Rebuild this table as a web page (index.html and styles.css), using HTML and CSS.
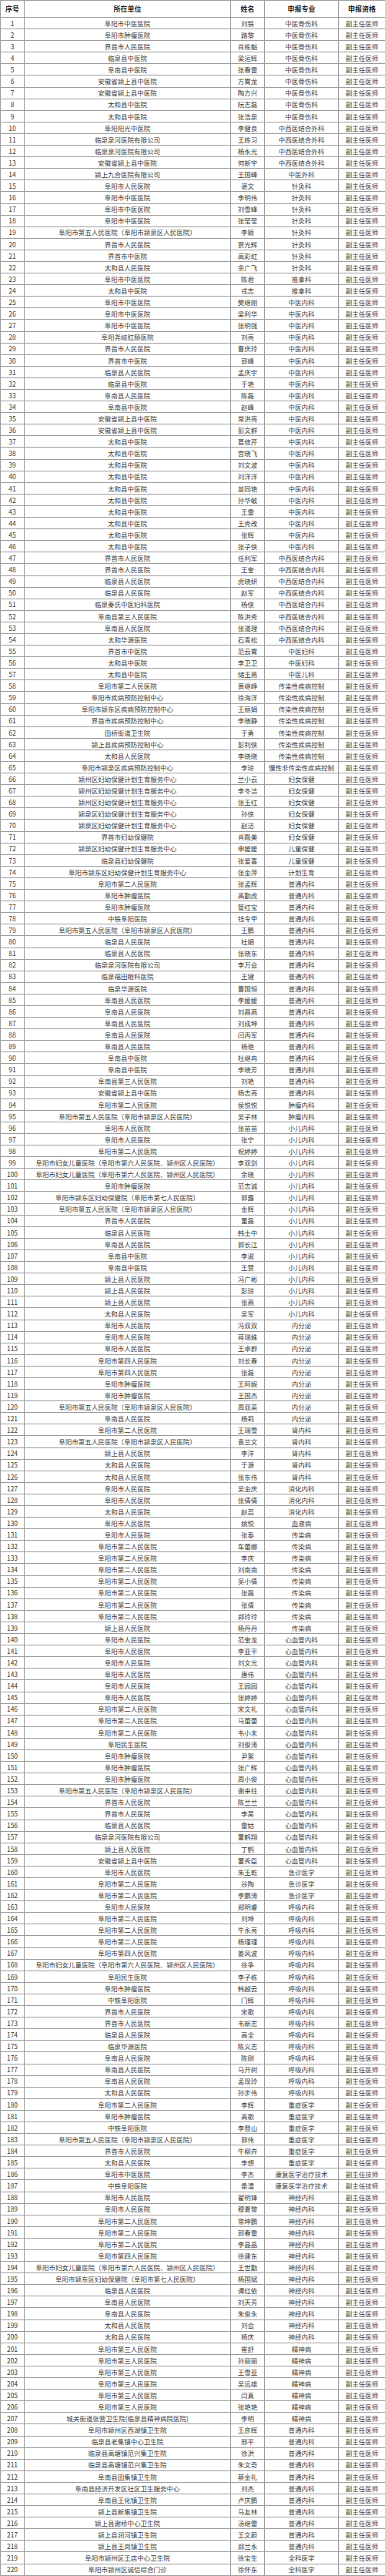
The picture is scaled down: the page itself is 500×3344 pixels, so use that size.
FILE: index.html
```html
<!DOCTYPE html>
<html lang="zh-CN">
<head>
<meta charset="utf-8">
<title>申报名单</title>
<link rel="stylesheet" href="styles.css">
</head>
<body>
<table class="list">
<colgroup><col class="c-no"><col class="c-unit"><col class="c-name"><col class="c-major"><col class="c-qual"></colgroup>
<thead>
<tr><th>序号</th><th>所在单位</th><th>姓名</th><th>申报专业</th><th>申报资格</th></tr>
</thead>
<tbody>
<tr><td>1</td><td>阜阳市中医医院</td><td>刘铁</td><td>中医骨伤科</td><td>副主任医师</td></tr>
<tr><td>2</td><td>阜阳市肿瘤医院</td><td>路黎</td><td>中医骨伤科</td><td>副主任医师</td></tr>
<tr><td>3</td><td>界首市人民医院</td><td>肖栋魁</td><td>中医骨伤科</td><td>副主任医师</td></tr>
<tr><td>4</td><td>临泉县中医院</td><td>梁运辉</td><td>中医骨伤科</td><td>副主任医师</td></tr>
<tr><td>5</td><td>阜南县中医院</td><td>张春雷</td><td>中医骨伤科</td><td>副主任医师</td></tr>
<tr><td>6</td><td>安徽省颍上县中医院</td><td>方霄龙</td><td>中医骨伤科</td><td>副主任医师</td></tr>
<tr><td>7</td><td>安徽省颍上县中医院</td><td>陶方兴</td><td>中医骨伤科</td><td>副主任医师</td></tr>
<tr><td>8</td><td>太和县中医院</td><td>阮志磊</td><td>中医骨伤科</td><td>副主任医师</td></tr>
<tr><td>9</td><td>太和县中医院</td><td>张浩泉</td><td>中医骨伤科</td><td>副主任医师</td></tr>
<tr><td>10</td><td>阜阳阳光中医院</td><td>李健良</td><td>中西医结合外科</td><td>副主任医师</td></tr>
<tr><td>11</td><td>临泉泉河医院有限公司</td><td>王练习</td><td>中西医结合外科</td><td>副主任医师</td></tr>
<tr><td>12</td><td>临泉泉河医院有限公司</td><td>杨永光</td><td>中西医结合外科</td><td>副主任医师</td></tr>
<tr><td>13</td><td>安徽省颍上县中医院</td><td>何新宇</td><td>中西医结合外科</td><td>副主任医师</td></tr>
<tr><td>14</td><td>颍上九合医院有限公司</td><td>王国峰</td><td>中医外科</td><td>副主任医师</td></tr>
<tr><td>15</td><td>阜阳市人民医院</td><td>谌文</td><td>针灸科</td><td>副主任医师</td></tr>
<tr><td>16</td><td>阜阳市中医医院</td><td>李明伟</td><td>针灸科</td><td>副主任医师</td></tr>
<tr><td>17</td><td>阜阳市中医医院</td><td>刘雪峰</td><td>针灸科</td><td>副主任医师</td></tr>
<tr><td>18</td><td>阜阳市中医医院</td><td>张莹莹</td><td>针灸科</td><td>副主任医师</td></tr>
<tr><td>19</td><td>阜阳市第五人民医院（阜阳市颍泉区人民医院）</td><td>李颖</td><td>针灸科</td><td>副主任医师</td></tr>
<tr><td>20</td><td>界首市人民医院</td><td>贾光辉</td><td>针灸科</td><td>副主任医师</td></tr>
<tr><td>21</td><td>界首市中医院</td><td>高彩虹</td><td>针灸科</td><td>副主任医师</td></tr>
<tr><td>22</td><td>太和县人民医院</td><td>余广飞</td><td>针灸科</td><td>副主任医师</td></tr>
<tr><td>23</td><td>阜阳市中医医院</td><td>陈君</td><td>推拿科</td><td>副主任医师</td></tr>
<tr><td>24</td><td>太和县中医院</td><td>戎志</td><td>推拿科</td><td>副主任医师</td></tr>
<tr><td>25</td><td>阜阳市中医医院</td><td>樊继刚</td><td>中医内科</td><td>副主任医师</td></tr>
<tr><td>26</td><td>阜阳市中医医院</td><td>梁利华</td><td>中医内科</td><td>副主任医师</td></tr>
<tr><td>27</td><td>阜阳市中医医院</td><td>张明强</td><td>中医内科</td><td>副主任医师</td></tr>
<tr><td>28</td><td>阜阳尧岐肛肠医院</td><td>刘亮</td><td>中医内科</td><td>副主任医师</td></tr>
<tr><td>29</td><td>界首市人民医院</td><td>曹庆玲</td><td>中医内科</td><td>副主任医师</td></tr>
<tr><td>30</td><td>界首市中医院</td><td>郭峰</td><td>中医内科</td><td>副主任医师</td></tr>
<tr><td>31</td><td>临泉县人民医院</td><td>孟庆宇</td><td>中医内科</td><td>副主任医师</td></tr>
<tr><td>32</td><td>临泉县中医院</td><td>于艳</td><td>中医内科</td><td>副主任医师</td></tr>
<tr><td>33</td><td>阜南县人民医院</td><td>陈磊</td><td>中医内科</td><td>副主任医师</td></tr>
<tr><td>34</td><td>阜南县中医院</td><td>赵峰</td><td>中医内科</td><td>副主任医师</td></tr>
<tr><td>35</td><td>安徽省颍上县中医院</td><td>常洪亮</td><td>中医内科</td><td>副主任医师</td></tr>
<tr><td>36</td><td>安徽省颍上县中医院</td><td>彭文群</td><td>中医内科</td><td>副主任医师</td></tr>
<tr><td>37</td><td>太和县中医院</td><td>葛修芹</td><td>中医内科</td><td>副主任医师</td></tr>
<tr><td>38</td><td>太和县中医院</td><td>宫晓飞</td><td>中医内科</td><td>副主任医师</td></tr>
<tr><td>39</td><td>太和县中医院</td><td>刘文波</td><td>中医内科</td><td>副主任医师</td></tr>
<tr><td>40</td><td>太和县中医院</td><td>刘洋洋</td><td>中医内科</td><td>副主任医师</td></tr>
<tr><td>41</td><td>太和县中医院</td><td>苗同艳</td><td>中医内科</td><td>副主任医师</td></tr>
<tr><td>42</td><td>太和县中医院</td><td>孙华敏</td><td>中医内科</td><td>副主任医师</td></tr>
<tr><td>43</td><td>太和县中医院</td><td>王雷</td><td>中医内科</td><td>副主任医师</td></tr>
<tr><td>44</td><td>太和县中医院</td><td>王秀改</td><td>中医内科</td><td>副主任医师</td></tr>
<tr><td>45</td><td>太和县中医院</td><td>张辉</td><td>中医内科</td><td>副主任医师</td></tr>
<tr><td>46</td><td>太和县中医院</td><td>张子侠</td><td>中医内科</td><td>副主任医师</td></tr>
<tr><td>47</td><td>界首市人民医院</td><td>任利军</td><td>中西医结合内科</td><td>副主任医师</td></tr>
<tr><td>48</td><td>界首市人民医院</td><td>王奎</td><td>中西医结合内科</td><td>副主任医师</td></tr>
<tr><td>49</td><td>临泉县人民医院</td><td>虎晓妍</td><td>中西医结合内科</td><td>副主任医师</td></tr>
<tr><td>50</td><td>临泉县人民医院</td><td>赵军</td><td>中西医结合内科</td><td>副主任医师</td></tr>
<tr><td>51</td><td>临泉秦氏中医妇科医院</td><td>杨侠</td><td>中西医结合内科</td><td>副主任医师</td></tr>
<tr><td>52</td><td>阜南县第三人民医院</td><td>陈洪秀</td><td>中西医结合内科</td><td>副主任医师</td></tr>
<tr><td>53</td><td>阜南县人民医院</td><td>张道理</td><td>中西医结合内科</td><td>副主任医师</td></tr>
<tr><td>54</td><td>太和华源医院</td><td>石青松</td><td>中西医结合内科</td><td>副主任医师</td></tr>
<tr><td>55</td><td>界首市中医院</td><td>范云霄</td><td>中医妇科</td><td>副主任医师</td></tr>
<tr><td>56</td><td>太和县中医院</td><td>李卫卫</td><td>中医妇科</td><td>副主任医师</td></tr>
<tr><td>57</td><td>太和县中医院</td><td>储玉燕</td><td>中医儿科</td><td>副主任医师</td></tr>
<tr><td>58</td><td>阜阳市第二人民医院</td><td>黄继峥</td><td>传染性疾病控制</td><td>副主任医师</td></tr>
<tr><td>59</td><td>阜阳市疾病预防控制中心</td><td>徐海洋</td><td>传染性疾病控制</td><td>副主任医师</td></tr>
<tr><td>60</td><td>阜阳市颍东区疾病预防控制中心</td><td>王丽娟</td><td>传染性疾病控制</td><td>副主任医师</td></tr>
<tr><td>61</td><td>界首市疾病预防控制中心</td><td>李晓静</td><td>传染性疾病控制</td><td>副主任医师</td></tr>
<tr><td>62</td><td>田桥街道卫生院</td><td>于勇</td><td>传染性疾病控制</td><td>副主任医师</td></tr>
<tr><td>63</td><td>颍上县疾病预防控制中心</td><td>彭利侠</td><td>传染性疾病控制</td><td>副主任医师</td></tr>
<tr><td>64</td><td>太和县人民医院</td><td>李晓晓</td><td>传染性疾病控制</td><td>副主任医师</td></tr>
<tr><td>65</td><td>阜阳市颍泉区疾病预防控制中心</td><td>李琼</td><td>慢性非传染性疾病控制</td><td>副主任医师</td></tr>
<tr><td>66</td><td>颍州区妇幼保健计划生育服务中心</td><td>兰小云</td><td>妇女保健</td><td>副主任医师</td></tr>
<tr><td>67</td><td>颍州区妇幼保健计划生育服务中心</td><td>李冬洁</td><td>妇女保健</td><td>副主任医师</td></tr>
<tr><td>68</td><td>颍州区妇幼保健计划生育服务中心</td><td>张玉红</td><td>妇女保健</td><td>副主任医师</td></tr>
<tr><td>69</td><td>颍泉区妇幼保健计划生育服务中心</td><td>孙侠</td><td>妇女保健</td><td>副主任医师</td></tr>
<tr><td>70</td><td>颍泉区妇幼保健计划生育服务中心</td><td>赵洁</td><td>妇女保健</td><td>副主任医师</td></tr>
<tr><td>71</td><td>界首市妇幼保健院</td><td>肖殿美</td><td>妇女保健</td><td>副主任医师</td></tr>
<tr><td>72</td><td>颍泉区妇幼保健计划生育服务中心</td><td>申媛媛</td><td>儿童保健</td><td>副主任医师</td></tr>
<tr><td>73</td><td>临泉县妇幼保健院</td><td>张爱喜</td><td>儿童保健</td><td>副主任医师</td></tr>
<tr><td>74</td><td>阜阳市颍东区妇幼保健计划生育服务中心</td><td>张金萍</td><td>计划生育</td><td>副主任医师</td></tr>
<tr><td>75</td><td>阜阳市第二人民医院</td><td>张孟辉</td><td>普通内科</td><td>副主任医师</td></tr>
<tr><td>76</td><td>阜阳市肿瘤医院</td><td>高勤虎</td><td>普通内科</td><td>副主任医师</td></tr>
<tr><td>77</td><td>阜阳市肿瘤医院</td><td>管红宝</td><td>普通内科</td><td>副主任医师</td></tr>
<tr><td>78</td><td>中铁阜阳医院</td><td>钱令甲</td><td>普通内科</td><td>副主任医师</td></tr>
<tr><td>79</td><td>阜阳市第五人民医院（阜阳市颍泉区人民医院）</td><td>王鹏</td><td>普通内科</td><td>副主任医师</td></tr>
<tr><td>80</td><td>临泉县人民医院</td><td>杜娟</td><td>普通内科</td><td>副主任医师</td></tr>
<tr><td>81</td><td>临泉县人民医院</td><td>张晓东</td><td>普通内科</td><td>副主任医师</td></tr>
<tr><td>82</td><td>临泉泉河医院有限公司</td><td>李万会</td><td>普通内科</td><td>副主任医师</td></tr>
<tr><td>83</td><td>临泉福田眼科医院</td><td>王键</td><td>普通内科</td><td>副主任医师</td></tr>
<tr><td>84</td><td>临泉华源医院</td><td>曹国恒</td><td>普通内科</td><td>副主任医师</td></tr>
<tr><td>85</td><td>阜南县人民医院</td><td>李媛媛</td><td>普通内科</td><td>副主任医师</td></tr>
<tr><td>86</td><td>阜南县人民医院</td><td>刘昌燕</td><td>普通内科</td><td>副主任医师</td></tr>
<tr><td>87</td><td>阜南县人民医院</td><td>刘成坤</td><td>普通内科</td><td>副主任医师</td></tr>
<tr><td>88</td><td>阜南县人民医院</td><td>闫丙军</td><td>普通内科</td><td>副主任医师</td></tr>
<tr><td>89</td><td>阜南县人民医院</td><td>杨艳</td><td>普通内科</td><td>副主任医师</td></tr>
<tr><td>90</td><td>阜南县中医院</td><td>杜继冉</td><td>普通内科</td><td>副主任医师</td></tr>
<tr><td>91</td><td>阜南县中医院</td><td>李晓芳</td><td>普通内科</td><td>副主任医师</td></tr>
<tr><td>92</td><td>阜南县第三人民医院</td><td>刘艳</td><td>普通内科</td><td>副主任医师</td></tr>
<tr><td>93</td><td>安徽省颍上县中医院</td><td>杨志亮</td><td>普通内科</td><td>副主任医师</td></tr>
<tr><td>94</td><td>阜阳市第二人民医院</td><td>侯悦悦</td><td>肿瘤内科</td><td>副主任医师</td></tr>
<tr><td>95</td><td>阜阳市第五人民医院（阜阳市颍泉区人民医院）</td><td>吴子林</td><td>肿瘤内科</td><td>副主任医师</td></tr>
<tr><td>96</td><td>阜阳市人民医院</td><td>张苗苗</td><td>小儿内科</td><td>副主任医师</td></tr>
<tr><td>97</td><td>阜阳市人民医院</td><td>张宁</td><td>小儿内科</td><td>副主任医师</td></tr>
<tr><td>98</td><td>阜阳市第二人民医院</td><td>祝婷婷</td><td>小儿内科</td><td>副主任医师</td></tr>
<tr><td>99</td><td>阜阳市妇女儿童医院（阜阳市第六人民医院、颍州区人民医院）</td><td>李双剑</td><td>小儿内科</td><td>副主任医师</td></tr>
<tr><td>100</td><td>阜阳市妇女儿童医院（阜阳市第六人民医院、颍州区人民医院）</td><td>余晓</td><td>小儿内科</td><td>副主任医师</td></tr>
<tr><td>101</td><td>阜阳市肿瘤医院</td><td>范志诚</td><td>小儿内科</td><td>副主任医师</td></tr>
<tr><td>102</td><td>阜阳市颍东区妇幼保健院（阜阳市第七人民医院）</td><td>郭露</td><td>小儿内科</td><td>副主任医师</td></tr>
<tr><td>103</td><td>阜阳市第五人民医院（阜阳市颍泉区人民医院）</td><td>金辉</td><td>小儿内科</td><td>副主任医师</td></tr>
<tr><td>104</td><td>界首市人民医院</td><td>董磊</td><td>小儿内科</td><td>副主任医师</td></tr>
<tr><td>105</td><td>临泉县人民医院</td><td>韩士中</td><td>小儿内科</td><td>副主任医师</td></tr>
<tr><td>106</td><td>阜南县人民医院</td><td>郭长江</td><td>小儿内科</td><td>副主任医师</td></tr>
<tr><td>107</td><td>阜南县中医院</td><td>李淑</td><td>小儿内科</td><td>副主任医师</td></tr>
<tr><td>108</td><td>阜南县中医院</td><td>王赞</td><td>小儿内科</td><td>副主任医师</td></tr>
<tr><td>109</td><td>颍上县人民医院</td><td>冯广彬</td><td>小儿内科</td><td>副主任医师</td></tr>
<tr><td>110</td><td>颍上县人民医院</td><td>彭琼</td><td>小儿内科</td><td>副主任医师</td></tr>
<tr><td>111</td><td>颍上县人民医院</td><td>张燕</td><td>小儿内科</td><td>副主任医师</td></tr>
<tr><td>112</td><td>太和县人民医院</td><td>吴军</td><td>小儿内科</td><td>副主任医师</td></tr>
<tr><td>113</td><td>阜阳市人民医院</td><td>冯双双</td><td>内分泌</td><td>副主任医师</td></tr>
<tr><td>114</td><td>阜阳市人民医院</td><td>蒋瑞姝</td><td>内分泌</td><td>副主任医师</td></tr>
<tr><td>115</td><td>阜阳市人民医院</td><td>王卓群</td><td>内分泌</td><td>副主任医师</td></tr>
<tr><td>116</td><td>阜阳市第四人民医院</td><td>刘长春</td><td>内分泌</td><td>副主任医师</td></tr>
<tr><td>117</td><td>阜阳市第四人民医院</td><td>张磊</td><td>内分泌</td><td>副主任医师</td></tr>
<tr><td>118</td><td>阜阳市肿瘤医院</td><td>王阿妮</td><td>内分泌</td><td>副主任医师</td></tr>
<tr><td>119</td><td>阜阳市肿瘤医院</td><td>王国杰</td><td>内分泌</td><td>副主任医师</td></tr>
<tr><td>120</td><td>阜阳市第五人民医院（阜阳市颍泉区人民医院）</td><td>周双英</td><td>内分泌</td><td>副主任医师</td></tr>
<tr><td>121</td><td>阜南县人民医院</td><td>杨莉</td><td>内分泌</td><td>副主任医师</td></tr>
<tr><td>122</td><td>阜阳市第二人民医院</td><td>王瑞雪</td><td>肾内科</td><td>副主任医师</td></tr>
<tr><td>123</td><td>阜阳市第五人民医院（阜阳市颍泉区人民医院）</td><td>袁兰文</td><td>肾内科</td><td>副主任医师</td></tr>
<tr><td>124</td><td>颍上县人民医院</td><td>李洋</td><td>肾内科</td><td>副主任医师</td></tr>
<tr><td>125</td><td>太和县人民医院</td><td>于源</td><td>肾内科</td><td>副主任医师</td></tr>
<tr><td>126</td><td>太和县人民医院</td><td>张东伟</td><td>肾内科</td><td>副主任医师</td></tr>
<tr><td>127</td><td>阜阳市人民医院</td><td>吴金庆</td><td>消化内科</td><td>副主任医师</td></tr>
<tr><td>128</td><td>阜阳市人民医院</td><td>张倩倩</td><td>消化内科</td><td>副主任医师</td></tr>
<tr><td>129</td><td>太和县人民医院</td><td>赵蕊</td><td>消化内科</td><td>副主任医师</td></tr>
<tr><td>130</td><td>阜阳市人民医院</td><td>姚悦</td><td>血液病</td><td>副主任医师</td></tr>
<tr><td>131</td><td>阜阳市人民医院</td><td>张泰</td><td>传染病</td><td>副主任医师</td></tr>
<tr><td>132</td><td>阜阳市第二人民医院</td><td>车蕾娜</td><td>传染病</td><td>副主任医师</td></tr>
<tr><td>133</td><td>阜阳市第二人民医院</td><td>李庆</td><td>传染病</td><td>副主任医师</td></tr>
<tr><td>134</td><td>阜阳市第二人民医院</td><td>刘南南</td><td>传染病</td><td>副主任医师</td></tr>
<tr><td>135</td><td>阜阳市第二人民医院</td><td>吴小倩</td><td>传染病</td><td>副主任医师</td></tr>
<tr><td>136</td><td>阜阳市第二人民医院</td><td>张磊</td><td>传染病</td><td>副主任医师</td></tr>
<tr><td>137</td><td>阜阳市第二人民医院</td><td>张倩</td><td>传染病</td><td>副主任医师</td></tr>
<tr><td>138</td><td>阜阳市第二人民医院</td><td>郑玲玲</td><td>传染病</td><td>副主任医师</td></tr>
<tr><td>139</td><td>颍上县人民医院</td><td>杨丹丹</td><td>传染病</td><td>副主任医师</td></tr>
<tr><td>140</td><td>阜阳市人民医院</td><td>范奎龙</td><td>心血管内科</td><td>副主任医师</td></tr>
<tr><td>141</td><td>阜阳市人民医院</td><td>李亚平</td><td>心血管内科</td><td>副主任医师</td></tr>
<tr><td>142</td><td>阜阳市人民医院</td><td>刘文光</td><td>心血管内科</td><td>副主任医师</td></tr>
<tr><td>143</td><td>阜阳市人民医院</td><td>唐伟</td><td>心血管内科</td><td>副主任医师</td></tr>
<tr><td>144</td><td>阜阳市人民医院</td><td>王园园</td><td>心血管内科</td><td>副主任医师</td></tr>
<tr><td>145</td><td>阜阳市人民医院</td><td>张婷婷</td><td>心血管内科</td><td>副主任医师</td></tr>
<tr><td>146</td><td>阜阳市第二人民医院</td><td>宋文礼</td><td>心血管内科</td><td>副主任医师</td></tr>
<tr><td>147</td><td>阜阳市第二人民医院</td><td>马蕾蕾</td><td>心血管内科</td><td>副主任医师</td></tr>
<tr><td>148</td><td>阜阳市第二人民医院</td><td>韦小未</td><td>心血管内科</td><td>副主任医师</td></tr>
<tr><td>149</td><td>阜阳民生医院</td><td>刘俊涛</td><td>心血管内科</td><td>副主任医师</td></tr>
<tr><td>150</td><td>阜阳市肿瘤医院</td><td>尹絮</td><td>心血管内科</td><td>副主任医师</td></tr>
<tr><td>151</td><td>阜阳市肿瘤医院</td><td>张广辉</td><td>心血管内科</td><td>副主任医师</td></tr>
<tr><td>152</td><td>阜阳市肿瘤医院</td><td>周小俊</td><td>心血管内科</td><td>副主任医师</td></tr>
<tr><td>153</td><td>阜阳市第五人民医院（阜阳市颍泉区人民医院）</td><td>谢来柱</td><td>心血管内科</td><td>副主任医师</td></tr>
<tr><td>154</td><td>界首市人民医院</td><td>陈兰兰</td><td>心血管内科</td><td>副主任医师</td></tr>
<tr><td>155</td><td>界首市人民医院</td><td>李昊</td><td>心血管内科</td><td>副主任医师</td></tr>
<tr><td>156</td><td>临泉县人民医院</td><td>雷姑</td><td>心血管内科</td><td>副主任医师</td></tr>
<tr><td>157</td><td>临泉泉河医院有限公司</td><td>董鹤翔</td><td>心血管内科</td><td>副主任医师</td></tr>
<tr><td>158</td><td>颍上县人民医院</td><td>丁鹤</td><td>心血管内科</td><td>副主任医师</td></tr>
<tr><td>159</td><td>安徽省颍上县中医院</td><td>董秀臣</td><td>心血管内科</td><td>副主任医师</td></tr>
<tr><td>160</td><td>阜阳市人民医院</td><td>朱玉乾</td><td>急诊医学</td><td>副主任医师</td></tr>
<tr><td>161</td><td>阜阳市第二人民医院</td><td>谷陶</td><td>急诊医学</td><td>副主任医师</td></tr>
<tr><td>162</td><td>阜阳市第二人民医院</td><td>李鹏涛</td><td>急诊医学</td><td>副主任医师</td></tr>
<tr><td>163</td><td>阜阳市人民医院</td><td>郑明睿</td><td>呼吸内科</td><td>副主任医师</td></tr>
<tr><td>164</td><td>阜阳市第二人民医院</td><td>刘坤</td><td>呼吸内科</td><td>副主任医师</td></tr>
<tr><td>165</td><td>阜阳市第二人民医院</td><td>牛永亮</td><td>呼吸内科</td><td>副主任医师</td></tr>
<tr><td>166</td><td>阜阳市第二人民医院</td><td>杨瑾瑾</td><td>呼吸内科</td><td>副主任医师</td></tr>
<tr><td>167</td><td>阜阳市第四人民医院</td><td>姜风波</td><td>呼吸内科</td><td>副主任医师</td></tr>
<tr><td>168</td><td>阜阳市妇女儿童医院（阜阳市第六人民医院、颍州区人民医院）</td><td>徐争</td><td>呼吸内科</td><td>副主任医师</td></tr>
<tr><td>169</td><td>阜阳民生医院</td><td>李子栋</td><td>呼吸内科</td><td>副主任医师</td></tr>
<tr><td>170</td><td>阜阳市肿瘤医院</td><td>韩越云</td><td>呼吸内科</td><td>副主任医师</td></tr>
<tr><td>171</td><td>中铁阜阳医院</td><td>门辉</td><td>呼吸内科</td><td>副主任医师</td></tr>
<tr><td>172</td><td>界首市人民医院</td><td>宋歌</td><td>呼吸内科</td><td>副主任医师</td></tr>
<tr><td>173</td><td>界首市人民医院</td><td>韦新志</td><td>呼吸内科</td><td>副主任医师</td></tr>
<tr><td>174</td><td>临泉县人民医院</td><td>高全</td><td>呼吸内科</td><td>副主任医师</td></tr>
<tr><td>175</td><td>临泉华源医院</td><td>陈义志</td><td>呼吸内科</td><td>副主任医师</td></tr>
<tr><td>176</td><td>阜南县人民医院</td><td>陈刚</td><td>呼吸内科</td><td>副主任医师</td></tr>
<tr><td>177</td><td>阜南县人民医院</td><td>马开树</td><td>呼吸内科</td><td>副主任医师</td></tr>
<tr><td>178</td><td>阜南县人民医院</td><td>孟现玲</td><td>呼吸内科</td><td>副主任医师</td></tr>
<tr><td>179</td><td>太和县人民医院</td><td>孙步伟</td><td>呼吸内科</td><td>副主任医师</td></tr>
<tr><td>180</td><td>阜阳市第二人民医院</td><td>李辉</td><td>重症医学</td><td>副主任医师</td></tr>
<tr><td>181</td><td>阜阳市肿瘤医院</td><td>高歌</td><td>重症医学</td><td>副主任医师</td></tr>
<tr><td>182</td><td>中铁阜阳医院</td><td>李登山</td><td>重症医学</td><td>副主任医师</td></tr>
<tr><td>183</td><td>阜阳市第五人民医院（阜阳市颍泉区人民医院）</td><td>郭伟</td><td>重症医学</td><td>副主任医师</td></tr>
<tr><td>184</td><td>界首市人民医院</td><td>牛柳卉</td><td>重症医学</td><td>副主任医师</td></tr>
<tr><td>185</td><td>太和县人民医院</td><td>李想</td><td>重症医学</td><td>副主任医师</td></tr>
<tr><td>186</td><td>阜阳市中医医院</td><td>李杰</td><td>康复医学治疗技术</td><td>副主任技师</td></tr>
<tr><td>187</td><td>中铁阜阳医院</td><td>桑澧</td><td>康复医学治疗技术</td><td>副主任技师</td></tr>
<tr><td>188</td><td>阜阳市人民医院</td><td>翟明锋</td><td>神经内科</td><td>副主任医师</td></tr>
<tr><td>189</td><td>阜阳市人民医院</td><td>穆夏黎</td><td>神经内科</td><td>副主任医师</td></tr>
<tr><td>190</td><td>阜阳市第二人民医院</td><td>常坤鹏</td><td>神经内科</td><td>副主任医师</td></tr>
<tr><td>191</td><td>阜阳市第二人民医院</td><td>郭春雷</td><td>神经内科</td><td>副主任医师</td></tr>
<tr><td>192</td><td>阜阳市第二人民医院</td><td>李晶晶</td><td>神经内科</td><td>副主任医师</td></tr>
<tr><td>193</td><td>阜阳市第四人民医院</td><td>徐建东</td><td>神经内科</td><td>副主任医师</td></tr>
<tr><td>194</td><td>阜阳市妇女儿童医院（阜阳市第六人民医院、颍州区人民医院）</td><td>王世勤</td><td>神经内科</td><td>副主任医师</td></tr>
<tr><td>195</td><td>阜阳市颍东区妇幼保健院（阜阳市第七人民医院）</td><td>杨国斌</td><td>神经内科</td><td>副主任医师</td></tr>
<tr><td>196</td><td>临泉县人民医院</td><td>谭红依</td><td>神经内科</td><td>副主任医师</td></tr>
<tr><td>197</td><td>阜南县人民医院</td><td>刘天芳</td><td>神经内科</td><td>副主任医师</td></tr>
<tr><td>198</td><td>阜南县人民医院</td><td>朱俊永</td><td>神经内科</td><td>副主任医师</td></tr>
<tr><td>199</td><td>太和县人民医院</td><td>刘会</td><td>神经内科</td><td>副主任医师</td></tr>
<tr><td>200</td><td>太和县人民医院</td><td>杨庆</td><td>神经内科</td><td>副主任医师</td></tr>
<tr><td>201</td><td>阜阳市第三人民医院</td><td>崔舒</td><td>精神病</td><td>副主任医师</td></tr>
<tr><td>202</td><td>阜阳市第三人民医院</td><td>孙丽丽</td><td>精神病</td><td>副主任医师</td></tr>
<tr><td>203</td><td>阜阳市第三人民医院</td><td>王雪亚</td><td>精神病</td><td>副主任医师</td></tr>
<tr><td>204</td><td>阜阳市第三人民医院</td><td>吴远雄</td><td>精神病</td><td>副主任医师</td></tr>
<tr><td>205</td><td>阜阳市第三人民医院</td><td>闫真</td><td>精神病</td><td>副主任医师</td></tr>
<tr><td>206</td><td>阜阳市第三人民医院</td><td>张艳艳</td><td>精神病</td><td>副主任医师</td></tr>
<tr><td>207</td><td>城关街道张营卫生院(临泉县精神病院医院)</td><td>李明</td><td>精神病</td><td>副主任医师</td></tr>
<tr><td>208</td><td>阜阳市颍州区西湖镇卫生院</td><td>王彦辉</td><td>普通内科</td><td>副主任医师</td></tr>
<tr><td>209</td><td>临泉县老集镇中心卫生院</td><td>邢平</td><td>普通内科</td><td>副主任医师</td></tr>
<tr><td>210</td><td>临泉县高塘镇范兴集卫生院</td><td>徐洪</td><td>普通内科</td><td>副主任医师</td></tr>
<tr><td>211</td><td>临泉县高塘镇范兴集卫生院</td><td>朱文奇</td><td>普通内科</td><td>副主任医师</td></tr>
<tr><td>212</td><td>阜南县田集镇卫生院</td><td>蔡金礼</td><td>普通内科</td><td>副主任医师</td></tr>
<tr><td>213</td><td>阜南县经济开发区社区卫生服务中心</td><td>刘杰</td><td>普通内科</td><td>副主任医师</td></tr>
<tr><td>214</td><td>阜南县王化镇卫生院</td><td>卢庆鹏</td><td>普通内科</td><td>副主任医师</td></tr>
<tr><td>215</td><td>颍上县新集镇卫生院</td><td>马友林</td><td>普通内科</td><td>副主任医师</td></tr>
<tr><td>216</td><td>颍上县谢桥中心卫生院</td><td>汤继雷</td><td>普通内科</td><td>副主任医师</td></tr>
<tr><td>217</td><td>颍上县润河镇卫生院</td><td>王文蔚</td><td>普通内科</td><td>副主任医师</td></tr>
<tr><td>218</td><td>颍上县王岗镇卫生院</td><td>郑兰永</td><td>普通内科</td><td>副主任医师</td></tr>
<tr><td>219</td><td>阜阳市颍州区王店中心卫生院</td><td>徐宝生</td><td>全科医学</td><td>副主任医师</td></tr>
<tr><td>220</td><td>阜阳市颍州区诚信综合门诊</td><td>徐怀东</td><td>全科医学</td><td>副主任医师</td></tr>
</tbody>
</table>
</body>
</html>
```
FILE: styles.css
```css
html, body {
  margin: 0;
  padding: 0;
  background: #ffffff;
}

body {
  font-family: "Noto Sans CJK SC", "Noto Sans", sans-serif;
  color: #3a3a3a;
}

.list {
  width: 500px;
  border-collapse: collapse;
  table-layout: fixed;
}

.c-no { width: 31px; }
.c-unit { width: 268px; }
.c-name { width: 44px; }
.c-major { width: 96px; }
.c-qual { width: 61px; }

.list th,
.list td {
  border: 1px solid #9c9c9c;
  padding: 0;
  text-align: center;
  vertical-align: middle;
  white-space: nowrap;
  overflow: hidden;
  line-height: 1;
}

.list thead tr {
  height: 22px;
}

.list th {
  font-size: 9px;
  font-weight: 700;
  color: #222222;
}

.list tbody tr {
  height: 15.1px;
}

.list td {
  font-size: 8.5px;
}
```
